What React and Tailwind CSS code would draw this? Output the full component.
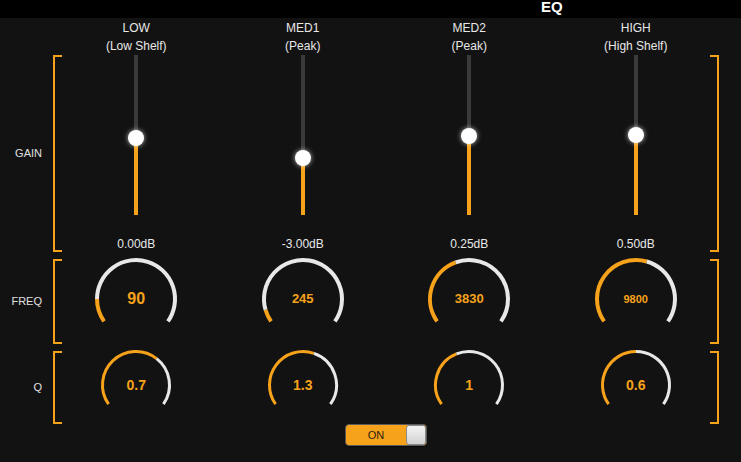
const bands = [
  { name: 'LOW', type: '(Low Shelf)', gain: '0.00dB', thumb: 83, freq: '90', freqAngle: -90, freqSize: 'text-[16px]', q: '0.7', qAngle: 38 },
  { name: 'MED1', type: '(Peak)', gain: '-3.00dB', thumb: 103, freq: '245', freqAngle: -106, freqSize: 'text-[13px]', q: '1.3', qAngle: 19 },
  { name: 'MED2', type: '(Peak)', gain: '0.25dB', thumb: 81, freq: '3830', freqAngle: -20, freqSize: 'text-[13px]', q: '1', qAngle: -22 },
  { name: 'HIGH', type: '(High Shelf)', gain: '0.50dB', thumb: 80, freq: '9800', freqAngle: 16, freqSize: 'text-[11px]', q: '0.6', qAngle: 0 },
];

const START = -125;
const END = 125;

function point(c, r, a) {
  const rad = (a * Math.PI) / 180;
  return [c + r * Math.sin(rad), c - r * Math.cos(rad)];
}

function arc(c, r, a0, a1) {
  const [x0, y0] = point(c, r, a0);
  const [x1, y1] = point(c, r, a1);
  const large = a1 - a0 > 180 ? 1 : 0;
  return `M ${x0} ${y0} A ${r} ${r} 0 ${large} 1 ${x1} ${y1}`;
}

function Knob({ size, radius, stroke, angle, value, textSize }) {
  const c = size / 2;
  return (
    <div className="relative" style={{ width: size, height: size }}>
      <svg width={size} height={size}>
        <path d={arc(c, radius, START, angle)} fill="none" stroke="#f7a21b" strokeWidth={stroke} />
        <path d={arc(c, radius, angle, END)} fill="none" stroke="#e8e8e8" strokeWidth={stroke} />
      </svg>
      <div className={`absolute inset-0 flex items-center justify-center font-bold text-[#f7a21b] ${textSize}`}>
        {value}
      </div>
    </div>
  );
}

function Row({ label, height, children }) {
  return (
    <div className="flex" style={{ height }}>
      <div className="flex w-[53px] shrink-0 items-center justify-end pr-[11px] text-[11px] text-[#e0e0e0]">{label}</div>
      <div className="w-[9px] shrink-0 border-y-2 border-l-2 border-[#f7a21b]" />
      <div className="-mx-[9px] grid w-[666px] shrink-0 grid-cols-4">{children}</div>
      <div className="w-[9px] shrink-0 border-y-2 border-r-2 border-[#f7a21b]" />
    </div>
  );
}

export default function App() {
  return (
    <div className="h-[462px] w-[741px] overflow-hidden bg-[#121212] font-['Liberation_Sans',Arial,sans-serif] text-[#e8e8e8]">
      <div className="flex h-[18px] items-start overflow-hidden bg-black">
        <span className="ml-[541px] -mt-[1px] text-[15px] font-bold leading-none text-white">EQ</span>
      </div>

      <div className="mt-[1px] flex">
        <div className="w-[53px] shrink-0" />
        <div className="grid w-[666px] grid-cols-4 text-center text-[12px] leading-[18px]">
          {bands.map((b) => (
            <div key={b.name}>
              <div>{b.name}</div>
              <div>{b.type}</div>
            </div>
          ))}
        </div>
      </div>

      <Row label="GAIN" height={197}>
        {bands.map((b) => (
          <div key={b.name} className="flex flex-col items-center">
            <div className="relative h-[160px] w-1 bg-[#3a3a3a]">
              <div className="absolute bottom-0 left-0 w-1 bg-[#f7a21b]" style={{ top: b.thumb }} />
              <div
                className="absolute left-1/2 h-4 w-4 -translate-x-1/2 rounded-full bg-white shadow-[0_0_5px_rgba(255,255,255,0.7)]"
                style={{ top: b.thumb - 8 }}
              />
            </div>
            <div className="mt-[20px] text-[12px] leading-[18px]">{b.gain}</div>
          </div>
        ))}
      </Row>

      <div className="h-[7px]" />

      <Row label="FREQ" height={85}>
        {bands.map((b) => (
          <div key={b.name} className="-mt-[3px] flex justify-center">
            <Knob size={86} radius={39} stroke={4} angle={b.freqAngle} value={b.freq} textSize={b.freqSize} />
          </div>
        ))}
      </Row>

      <div className="h-[7px]" />

      <Row label="Q" height={73}>
        {bands.map((b) => (
          <div key={b.name} className="-mt-[3px] flex justify-center">
            <Knob size={74} radius={33.5} stroke={3} angle={b.qAngle} value={b.q} textSize="text-[14px]" />
          </div>
        ))}
      </Row>

      <div className="flex w-[719px] justify-center pl-[53px]">
        <div className="flex h-[22px] w-[82px] items-center overflow-hidden rounded-[4px] border border-[#5a5a5a] bg-[#f7a21b] shadow-[0_1px_1px_rgba(0,0,0,0.6)]">
          <div className="flex-1 text-center text-[11px] text-[#2b2213]">ON</div>
          <div className="h-[20px] w-[20px] rounded-[3px] border border-[#8a8a8a] bg-gradient-to-b from-[#f4f4f4] to-[#d2d2d2]" />
        </div>
      </div>
    </div>
  );
}
